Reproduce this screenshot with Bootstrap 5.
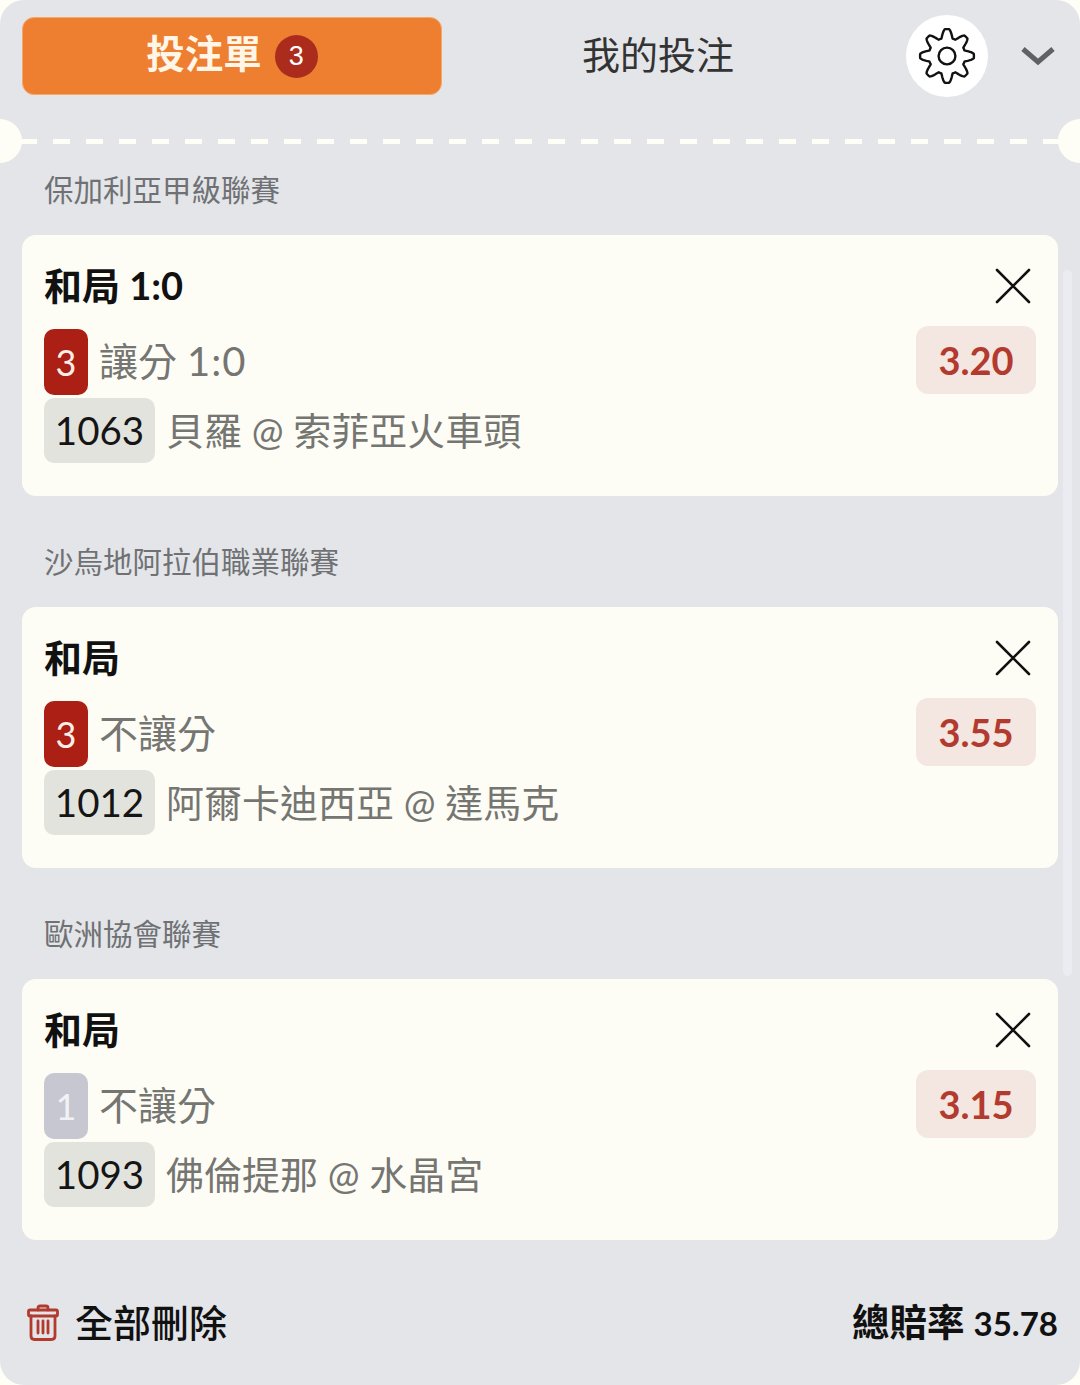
<!DOCTYPE html>
<html lang="en">
  <head>
    <meta charset="UTF-8" />
    <meta name="viewport" content="width=device-width, initial-scale=1.0" />
    <title>投注單</title>
    <link
      href="https://cdn.jsdelivr.net/npm/bootstrap@5.3.0/dist/css/bootstrap.min.css"
      rel="stylesheet"
    />
    <style>
      html,
      body {
        background-color: #fffef6;
      }
      body {
        font-family: 'Lato', 'Noto Sans CJK TC', sans-serif;
        overflow: hidden;
      }
      .slip-panel {
        position: relative;
        width: 1080px;
        height: 1385px;
        padding: 15px 22px 0;
        background-color: #e3e5e8;
        border-radius: 24px;
      }
      .slip-head {
        height: 82px;
      }
      .tab-active {
        width: 420px;
        height: 78px;
        font-size: 38.5px;
        font-weight: 700;
        color: #fff6e8;
        background-color: #ee7f30;
        border: 1px solid #f6a868;
        border-radius: 12px;
      }
      .tab-label {
        margin-bottom: 4px;
      }
      .tab-count {
        width: 43px;
        height: 43px;
        margin-left: 13px;
        font-family: 'Liberation Sans', sans-serif;
        font-size: 27px;
        font-weight: 400;
        color: #fff;
        background-color: #ab2c1c;
      }
      .tab-other {
        width: 432px;
        font-size: 38px;
        color: #333;
        background: none;
      }
      .gear-btn {
        width: 82px;
        height: 82px;
        margin-left: 32px;
        background-color: #fff;
      }
      .chevron-btn {
        margin-left: 33px;
      }
      .dash-line {
        height: 5px;
        margin: 42px -22px 0;
        background-image: linear-gradient(90deg, #fffef6 17px, transparent 17px);
        background-size: 33px 5px;
        background-position: 20px 0;
      }
      .notch {
        position: absolute;
        top: 119px;
        width: 44px;
        height: 44px;
        background-color: #fffef6;
        border-radius: 50%;
      }
      .notch-left {
        left: -22px;
      }
      .notch-right {
        right: -22px;
      }
      .scroll-thumb {
        position: absolute;
        top: 270px;
        right: 8px;
        width: 9px;
        height: 706px;
        background-color: #ebecf2;
        border-radius: 5px;
      }
      .league-name {
        height: 40px;
        margin: 46px 0 25px 22px;
        font-size: 29.5px;
        line-height: 40px;
        color: #6f7174;
      }
      .league-name.first-league {
        margin-top: 26px;
      }
      .bet-card {
        position: relative;
        height: 261px;
        padding: 26px 22px 0;
        background-color: #fdfdf6;
        border: 0;
        border-radius: 14px;
      }
      .bet-title {
        height: 50px;
        font-size: 38px;
        font-weight: 700;
        line-height: 50px;
        color: #111;
      }
      .bet-title span {
        margin-bottom: 2px;
      }
      .close-x {
        margin-right: 5px;
      }
      .bet-body {
        margin-top: 18px;
      }
      .level-tag {
        width: 44px;
        height: 66px;
        margin-right: 11px;
        font-size: 36px;
        color: #fdeee8;
        background-color: #ab1f14;
        border-radius: 10px;
      }
      .level-tag.level-low {
        color: #f2f2f5;
        background-color: #c6c7d0;
      }
      .bet-text {
        font-size: 38px;
        color: #757572;
      }
      .pick-text {
        margin-bottom: 2px;
        font-size: 39px;
      }
      .pick-score {
        font-size: 40px;
        letter-spacing: 1px;
      }
      .match-row {
        margin-top: 3px;
      }
      .match-no {
        width: 111px;
        height: 65px;
        margin-right: 11px;
        font-size: 38.5px;
        color: #151515;
        background-color: #e3e3de;
        border-radius: 10px;
      }
      .odds-pill {
        width: 120px;
        height: 68px;
        margin-top: -3px;
        font-size: 38px;
        font-weight: 700;
        color: #b23a2e;
        background-color: #f4e6e1;
        border-radius: 12px;
      }
      .slip-foot {
        margin-top: 54px;
        height: 56px;
      }
      .clear-all {
        font-size: 38px;
        font-weight: 500;
        color: #111;
        margin-left: 5px;
      }
      .clear-all svg {
        margin-right: 16px;
      }
      .total-odds {
        font-size: 37.5px;
        font-weight: 700;
        color: #111;
      }
      .total-num {
        font-size: 33px;
      }
    </style>
  </head>
  <body>
    <div class="slip-panel">
      <div class="slip-head d-flex align-items-center">
        <div class="tab-active d-flex align-items-center justify-content-center">
          <span class="tab-label">投注單</span><span class="tab-count rounded-circle d-flex align-items-center justify-content-center">3</span>
        </div>
        <div class="tab-other tab-label text-center">我的投注</div>
        <div class="gear-btn rounded-circle d-flex align-items-center justify-content-center">
          <svg width="60" height="60" viewBox="-30 -30 60 60" fill="none" stroke="#111" stroke-width="2.4" stroke-linejoin="round">
            <path id="gearPath" d=""></path>
            <circle r="8.4"></circle>
          </svg>
        </div>
        <div class="chevron-btn d-flex">
          <svg width="34" height="22" viewBox="0 0 34 22" fill="none" stroke="#5f6163" stroke-width="5">
            <path d="M2 4 L17 17 L32 4"></path>
          </svg>
        </div>
      </div>
      <div class="dash-line"></div>
      <span class="notch notch-left"></span>
      <span class="notch notch-right"></span>
      <span class="scroll-thumb"></span>

      <div class="league-name first-league">保加利亞甲級聯賽</div>
      <div class="card bet-card">
        <div class="d-flex justify-content-between align-items-center bet-title">
          <span>和局 1:0</span>
          <svg class="close-x" width="36" height="36" viewBox="0 0 36 36" stroke="#111" stroke-width="2.6" stroke-linecap="round">
            <path d="M2 2 L34 34 M34 2 L2 34"></path>
          </svg>
        </div>
        <div class="bet-body d-flex justify-content-between align-items-start">
          <div>
            <div class="d-flex align-items-center">
              <span class="level-tag d-flex align-items-center justify-content-center">3</span>
              <span class="bet-text pick-text">讓分 <span class="pick-score">1:0</span></span>
            </div>
            <div class="match-row d-flex align-items-center">
              <span class="match-no d-flex align-items-center justify-content-center">1063</span>
              <span class="bet-text">貝羅 @ 索菲亞火車頭</span>
            </div>
          </div>
          <div class="odds-pill d-flex align-items-center justify-content-center">3.20</div>
        </div>
      </div>

      <div class="league-name">沙烏地阿拉伯職業聯賽</div>
      <div class="card bet-card">
        <div class="d-flex justify-content-between align-items-center bet-title">
          <span>和局</span>
          <svg class="close-x" width="36" height="36" viewBox="0 0 36 36" stroke="#111" stroke-width="2.6" stroke-linecap="round">
            <path d="M2 2 L34 34 M34 2 L2 34"></path>
          </svg>
        </div>
        <div class="bet-body d-flex justify-content-between align-items-start">
          <div>
            <div class="d-flex align-items-center">
              <span class="level-tag d-flex align-items-center justify-content-center">3</span>
              <span class="bet-text pick-text">不讓分</span>
            </div>
            <div class="match-row d-flex align-items-center">
              <span class="match-no d-flex align-items-center justify-content-center">1012</span>
              <span class="bet-text">阿爾卡迪西亞 @ 達馬克</span>
            </div>
          </div>
          <div class="odds-pill d-flex align-items-center justify-content-center">3.55</div>
        </div>
      </div>

      <div class="league-name">歐洲協會聯賽</div>
      <div class="card bet-card">
        <div class="d-flex justify-content-between align-items-center bet-title">
          <span>和局</span>
          <svg class="close-x" width="36" height="36" viewBox="0 0 36 36" stroke="#111" stroke-width="2.6" stroke-linecap="round">
            <path d="M2 2 L34 34 M34 2 L2 34"></path>
          </svg>
        </div>
        <div class="bet-body d-flex justify-content-between align-items-start">
          <div>
            <div class="d-flex align-items-center">
              <span class="level-tag level-low d-flex align-items-center justify-content-center">1</span>
              <span class="bet-text pick-text">不讓分</span>
            </div>
            <div class="match-row d-flex align-items-center">
              <span class="match-no d-flex align-items-center justify-content-center">1093</span>
              <span class="bet-text">佛倫提那 @ 水晶宮</span>
            </div>
          </div>
          <div class="odds-pill d-flex align-items-center justify-content-center">3.15</div>
        </div>
      </div>

      <div class="slip-foot d-flex justify-content-between align-items-center">
        <div class="clear-all d-flex align-items-center">
          <svg width="32" height="37" viewBox="0 0 32 37" fill="none" stroke="#b23a2e" stroke-width="2.8" stroke-linejoin="round" stroke-linecap="round">
            <path d="M11 6 V4 Q11 2 13 2 H19 Q21 2 21 4 V6"></path>
            <rect x="1.5" y="6" width="29" height="6" rx="1.5"></rect>
            <path d="M4 12 V32 Q4 35.5 7.5 35.5 H24.5 Q28 35.5 28 32 V12"></path>
            <path d="M11 17 V29 M16 17 V29 M21 17 V29"></path>
          </svg>
          全部刪除
        </div>
        <div class="total-odds">總賠率 <span class="total-num">35.78</span></div>
      </div>
    </div>

    <script src="https://cdn.jsdelivr.net/npm/bootstrap@5.3.0/dist/js/bootstrap.bundle.min.js"></script>
    <script>
      // gear outline, 8 rounded teeth
      const gearPoints = []
      for (let i = 0; i < 240; i++) {
        const angle = (i / 240) * Math.PI * 2
        const wave = Math.max(-1, Math.min(1, 1.25 * Math.cos(angle * 8)))
        const radius = 22.6 + 4.3 * wave
        gearPoints.push(
          (radius * Math.sin(angle)).toFixed(2) + ' ' + (-radius * Math.cos(angle)).toFixed(2)
        )
      }
      document.getElementById('gearPath').setAttribute('d', 'M' + gearPoints.join(' L') + ' Z')
    </script>
  </body>
</html>
